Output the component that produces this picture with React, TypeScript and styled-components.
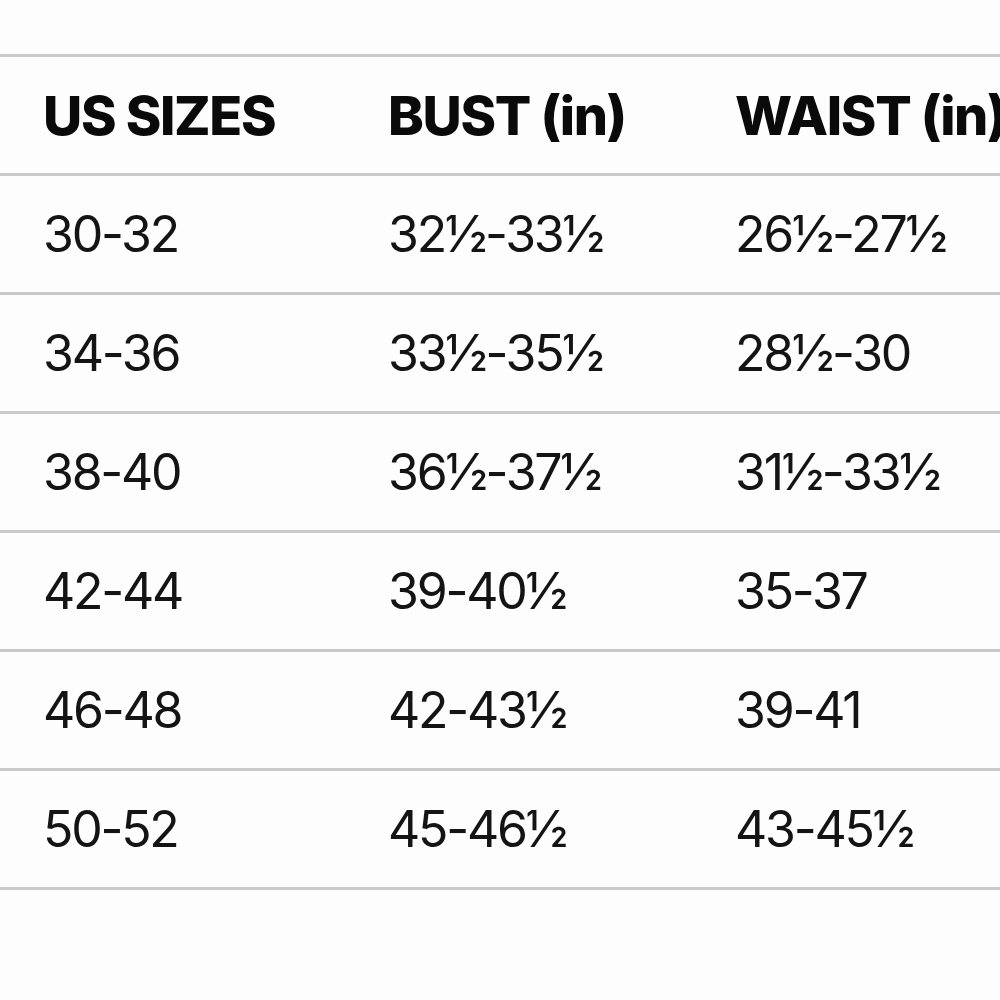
import React from "react";
import styled, { createGlobalStyle } from "styled-components";

type SizeRow = {
  us: string;
  bust: string;
  waist: string;
};

const rows: SizeRow[] = [
  { us: "30-32", bust: "32½-33½", waist: "26½-27½" },
  { us: "34-36", bust: "33½-35½", waist: "28½-30" },
  { us: "38-40", bust: "36½-37½", waist: "31½-33½" },
  { us: "42-44", bust: "39-40½", waist: "35-37" },
  { us: "46-48", bust: "42-43½", waist: "39-41" },
  { us: "50-52", bust: "45-46½", waist: "43-45½" },
];

const GlobalStyle = createGlobalStyle`
  html, body {
    margin: 0;
    padding: 0;
    background: #fdfdfd;
  }
  body {
    font-family: Inter, "Liberation Sans", sans-serif;
    color: #111;
    overflow: hidden;
  }
`;

export default function App() {
  return (
    <>
      <GlobalStyle />
      <Page>
        <Table>
          <thead>
            <tr>
              <HeadCell>US SIZES</HeadCell>
              <HeadCell>BUST (in)</HeadCell>
              <HeadCell>WAIST (in)</HeadCell>
            </tr>
          </thead>
          <tbody>
            {rows.map((row) => (
              <tr key={row.us}>
                <Cell>{row.us}</Cell>
                <Cell>{row.bust}</Cell>
                <Cell>{row.waist}</Cell>
              </tr>
            ))}
          </tbody>
        </Table>
      </Page>
    </>
  );
}

const Page = styled.div`
  width: 1000px;
  height: 1000px;
  padding-top: 54px;
  box-sizing: border-box;
  overflow: hidden;
`;

const Table = styled.table`
  width: 1100px;
  border-collapse: collapse;
  table-layout: fixed;
  border-top: 3px solid #cacaca;

  tr {
    height: 119px;
    border-bottom: 3px solid #cacaca;
  }

  td:first-child,
  th:first-child {
    width: 388px;
    padding-left: 43px;
  }

  td:nth-child(2),
  th:nth-child(2) {
    width: 347px;
  }
`;

const HeadCell = styled.th`
  box-sizing: border-box;
  text-align: left;
  vertical-align: middle;
  padding: 0;
  font-size: 54px;
  font-weight: 800;
  letter-spacing: -0.025em;
  color: #0a0a0a;
  white-space: nowrap;
`;

const Cell = styled.td`
  box-sizing: border-box;
  vertical-align: middle;
  padding: 0;
  font-size: 50px;
  font-weight: 400;
  letter-spacing: -0.045em;
  color: #141414;
  white-space: nowrap;
`;
